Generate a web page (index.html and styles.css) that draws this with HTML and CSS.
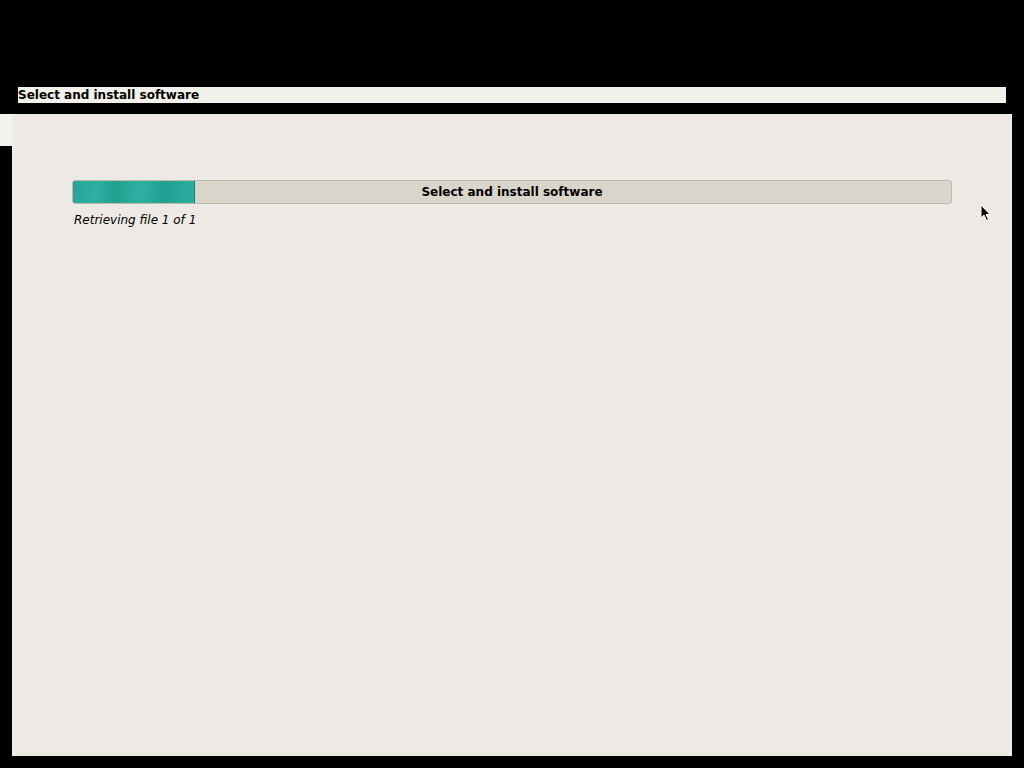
FILE: index.html
```html
<!DOCTYPE html>
<html>
<head>
<meta charset="utf-8">
<link rel="stylesheet" href="styles.css">
</head>
<body>
<div class="screen">
  <div class="titlebar">Select and install software</div>
  <div class="below">
    <div class="stub"></div>
    <div class="panel">
      <div class="progress">
        <div class="fill"></div>
        <div class="label">Select and install software</div>
      </div>
      <div class="status">Retrieving file 1 of 1</div>
    </div>
  </div>
  <svg class="cursor" width="12" height="18" viewBox="0 0 12 18">
    <path d="M1 1 L1 14 L4 11 L6.5 16.5 L8.5 15.5 L6 10.5 L10 10.5 Z" fill="#000" stroke="#fff" stroke-width="1"/>
  </svg>
</div>
</body>
</html>
```

FILE: styles.css
```css
html, body {
  margin: 0;
  padding: 0;
  background: #000;
}
.screen {
  position: relative;
  width: 1024px;
  height: 768px;
  background: #000;
  font-family: "DejaVu Sans", sans-serif;
  font-size: 12px;
  color: #000;
  overflow: hidden;
  padding-top: 87px;
  box-sizing: border-box;
}
.titlebar {
  margin-left: 18px;
  width: 988px;
  height: 16px;
  background: #f1f0ea;
  font-weight: bold;
  line-height: 16px;
  font-size: 12px;
}
.below {
  display: flex;
  margin-top: 11px;
}
.stub {
  width: 12px;
  height: 31px;
  background: #f4f2ef;
  border-top: 1px solid #fbfaf8;
}
.panel {
  width: 1000px;
  height: 642px;
  background: #edeae6;
  box-sizing: border-box;
  padding: 66px 60px 0 60px;
}
.progress {
  position: relative;
  width: 880px;
  height: 24px;
  box-sizing: border-box;
  background: #d9d5ca;
  border: 1px solid #bdb9ae;
  border-radius: 3px;
  display: flex;
}
.fill {
  width: 122px;
  height: 22px;
  background: linear-gradient(100deg, #25a396 0%, #2db0a2 20%, #22a092 35%, #2db0a2 55%, #22a193 75%, #2baea0 100%);
  border-right: 1px solid #1a7f73;
  border-radius: 2px 0 0 2px;
  box-sizing: border-box;
}
.label {
  position: absolute;
  left: 0;
  right: 0;
  top: 0;
  line-height: 22px;
  text-align: center;
  font-weight: bold;
  font-size: 12px;
}
.status {
  margin-top: 8px;
  padding-left: 2px;
  font-style: italic;
  font-size: 12px;
  line-height: 16px;
}
.cursor {
  position: absolute;
  left: 980px;
  top: 204px;
}
```
